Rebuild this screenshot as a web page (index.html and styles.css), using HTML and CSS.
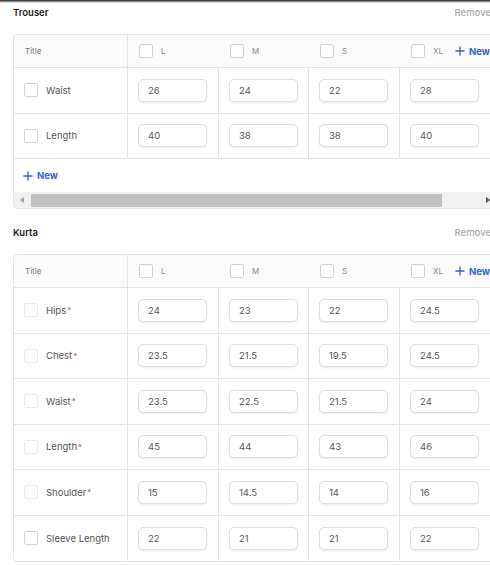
FILE: index.html
```html
<!DOCTYPE html>
<html lang="en">
<head>
  <meta charset="UTF-8" />
  <meta name="viewport" content="width=device-width, initial-scale=1.0" />
  <title>Size Charts</title>
  <link rel="stylesheet" href="styles.css">
</head>
<body>
  <div class="top-shade"></div>

  <div class="page">
    <!-- Trouser chart -->
    <div class="chart">
      <div class="chart-head">
        <h3>Trouser</h3>
        <span class="remove">Remove</span>
      </div>
      <div class="size-table">
        <div class="row head-row">
          <div class="cell title-cell">Title</div>
          <div class="cell"><span class="check"></span><span class="col-label">L</span></div>
          <div class="cell"><span class="check"></span><span class="col-label">M</span></div>
          <div class="cell"><span class="check"></span><span class="col-label">S</span></div>
          <div class="cell"><span class="check"></span><span class="col-label">XL</span>
            <a href="#" class="add-btn head-add"><svg width="10" height="10" viewBox="0 0 10 10"><path d="M5 0.5v9M0.5 5h9" /></svg>New</a>
          </div>
        </div>
        <div class="row">
          <div class="cell name-cell"><span class="check"></span>Waist</div>
          <div class="cell"><input type="text" value="26" /></div>
          <div class="cell"><input type="text" value="24" /></div>
          <div class="cell"><input type="text" value="22" /></div>
          <div class="cell"><input type="text" value="28" /></div>
        </div>
        <div class="row">
          <div class="cell name-cell"><span class="check"></span>Length</div>
          <div class="cell"><input type="text" value="40" /></div>
          <div class="cell"><input type="text" value="38" /></div>
          <div class="cell"><input type="text" value="38" /></div>
          <div class="cell"><input type="text" value="40" /></div>
        </div>
        <div class="foot-row">
          <a href="#" class="add-btn"><svg width="10" height="10" viewBox="0 0 10 10"><path d="M5 0.5v9M0.5 5h9" /></svg>New</a>
        </div>
        <div class="hscroll">
          <span class="scroll-btn"><i class="arrow-left"></i></span>
          <span class="thumb"></span>
          <span class="scroll-btn end"><i class="arrow-right"></i></span>
        </div>
      </div>
    </div>

    <!-- Kurta chart -->
    <div class="chart">
      <div class="chart-head">
        <h3>Kurta</h3>
        <span class="remove">Remove</span>
      </div>
      <div class="size-table">
        <div class="row head-row">
          <div class="cell title-cell">Title</div>
          <div class="cell"><span class="check"></span><span class="col-label">L</span></div>
          <div class="cell"><span class="check"></span><span class="col-label">M</span></div>
          <div class="cell"><span class="check"></span><span class="col-label">S</span></div>
          <div class="cell"><span class="check"></span><span class="col-label">XL</span>
            <a href="#" class="add-btn head-add"><svg width="10" height="10" viewBox="0 0 10 10"><path d="M5 0.5v9M0.5 5h9" /></svg>New</a>
          </div>
        </div>
        <div class="row">
          <div class="cell name-cell"><span class="check locked"></span>Hips<sup>*</sup></div>
          <div class="cell"><input type="text" value="24" /></div>
          <div class="cell"><input type="text" value="23" /></div>
          <div class="cell"><input type="text" value="22" /></div>
          <div class="cell"><input type="text" value="24.5" /></div>
        </div>
        <div class="row">
          <div class="cell name-cell"><span class="check locked"></span>Chest<sup>*</sup></div>
          <div class="cell"><input type="text" value="23.5" /></div>
          <div class="cell"><input type="text" value="21.5" /></div>
          <div class="cell"><input type="text" value="19.5" /></div>
          <div class="cell"><input type="text" value="24.5" /></div>
        </div>
        <div class="row">
          <div class="cell name-cell"><span class="check locked"></span>Waist<sup>*</sup></div>
          <div class="cell"><input type="text" value="23.5" /></div>
          <div class="cell"><input type="text" value="22.5" /></div>
          <div class="cell"><input type="text" value="21.5" /></div>
          <div class="cell"><input type="text" value="24" /></div>
        </div>
        <div class="row">
          <div class="cell name-cell"><span class="check locked"></span>Length<sup>*</sup></div>
          <div class="cell"><input type="text" value="45" /></div>
          <div class="cell"><input type="text" value="44" /></div>
          <div class="cell"><input type="text" value="43" /></div>
          <div class="cell"><input type="text" value="46" /></div>
        </div>
        <div class="row">
          <div class="cell name-cell"><span class="check locked"></span>Shoulder<sup>*</sup></div>
          <div class="cell"><input type="text" value="15" /></div>
          <div class="cell"><input type="text" value="14.5" /></div>
          <div class="cell"><input type="text" value="14" /></div>
          <div class="cell"><input type="text" value="16" /></div>
        </div>
        <div class="row">
          <div class="cell name-cell"><span class="check"></span>Sleeve Length</div>
          <div class="cell"><input type="text" value="22" /></div>
          <div class="cell"><input type="text" value="21" /></div>
          <div class="cell"><input type="text" value="21" /></div>
          <div class="cell"><input type="text" value="22" /></div>
        </div>
      </div>
    </div>
  </div>
</body>
</html>
```

FILE: styles.css
```css
html,
body {
  overflow: hidden;
}

body {
  margin: 0;
  font-family: Inter, "Noto Sans", sans-serif;
  color: #555;
  background-color: #fff;
}

.top-shade {
  height: 3px;
  margin-bottom: -3px;
  background: linear-gradient(rgba(0, 0, 0, 0.9), rgba(0, 0, 0, 0));
}

.page {
  width: 484px;
  padding: 2px 0 0 13px;
}

.chart + .chart {
  margin-top: 13px;
}

.chart-head {
  display: flex;
  justify-content: space-between;
  align-items: center;
  height: 20px;
  margin-bottom: 12px;
  padding-right: 6px;
}

.chart-head h3 {
  margin: 0;
  font-size: 9.5px;
  font-weight: 600;
  color: #222;
}

.remove {
  font-size: 9.5px;
  font-weight: 500;
  color: #aaa;
}

.size-table {
  border: 1px solid #e4e4e4;
  border-radius: 4px;
  overflow: hidden;
}

.row {
  display: grid;
  grid-template-columns: 114px 91px 90px 91px 91px;
  height: 45.5px;
  box-sizing: border-box;
  border-bottom: 1px solid #e4e4e4;
}

.size-table .row:last-child {
  border-bottom: none;
}

.cell {
  display: flex;
  align-items: center;
  padding: 0 10px;
  border-right: 1px solid #e4e4e4;
  font-size: 9.5px;
  white-space: nowrap;
}

.head-row {
  height: 33px;
  background-color: #fafafa;
}

.head-row .cell {
  padding-left: 11px;
  border-right: none;
}

.head-row .title-cell {
  border-right: 1px solid #e4e4e4;
  font-size: 8px;
  color: #777;
}

.col-label {
  font-size: 8px;
  color: #888;
}

.check {
  width: 14px;
  height: 14px;
  box-sizing: border-box;
  border: 1px solid #d2d2d2;
  border-radius: 2px;
  background-color: #fff;
  margin-right: 8px;
  flex-shrink: 0;
}

.check.locked {
  border-color: #ebebeb;
}

.name-cell sup {
  color: #d6405f;
  font-size: 8px;
  line-height: 0;
  margin-left: 1px;
}

.cell input {
  width: 69px;
  height: 23px;
  box-sizing: border-box;
  padding: 0 9px;
  border: 1px solid #dedede;
  border-radius: 5px;
  box-shadow: 0 1px 2px rgba(0, 0, 0, 0.08);
  font-family: Inter, "Noto Sans", sans-serif;
  font-size: 9.5px;
  color: #555;
  background-color: #fff;
}

.add-btn {
  display: flex;
  align-items: center;
  gap: 4px;
  color: #2f63d3;
  font-size: 9.5px;
  font-weight: 700;
  text-decoration: none;
}

.add-btn svg path {
  stroke: #2f63d3;
  stroke-width: 1.3;
  fill: none;
}

.head-add {
  margin-left: 12px;
}

.foot-row {
  display: flex;
  align-items: center;
  height: 33px;
  padding-left: 9px;
}

.hscroll {
  display: flex;
  align-items: center;
  height: 16px;
  background-color: #f1f1f1;
}

.scroll-btn {
  width: 16px;
  height: 16px;
  display: flex;
  align-items: center;
  justify-content: center;
  flex-shrink: 0;
}

.scroll-btn.end {
  margin-left: auto;
}

.arrow-left {
  border-top: 3.5px solid transparent;
  border-bottom: 3.5px solid transparent;
  border-right: 4px solid #a3a3a3;
}

.arrow-right {
  border-top: 3.5px solid transparent;
  border-bottom: 3.5px solid transparent;
  border-left: 4px solid #505050;
}

.thumb {
  width: 411px;
  height: 13px;
  margin-left: 1px;
  background-color: #c1c1c1;
}
```
